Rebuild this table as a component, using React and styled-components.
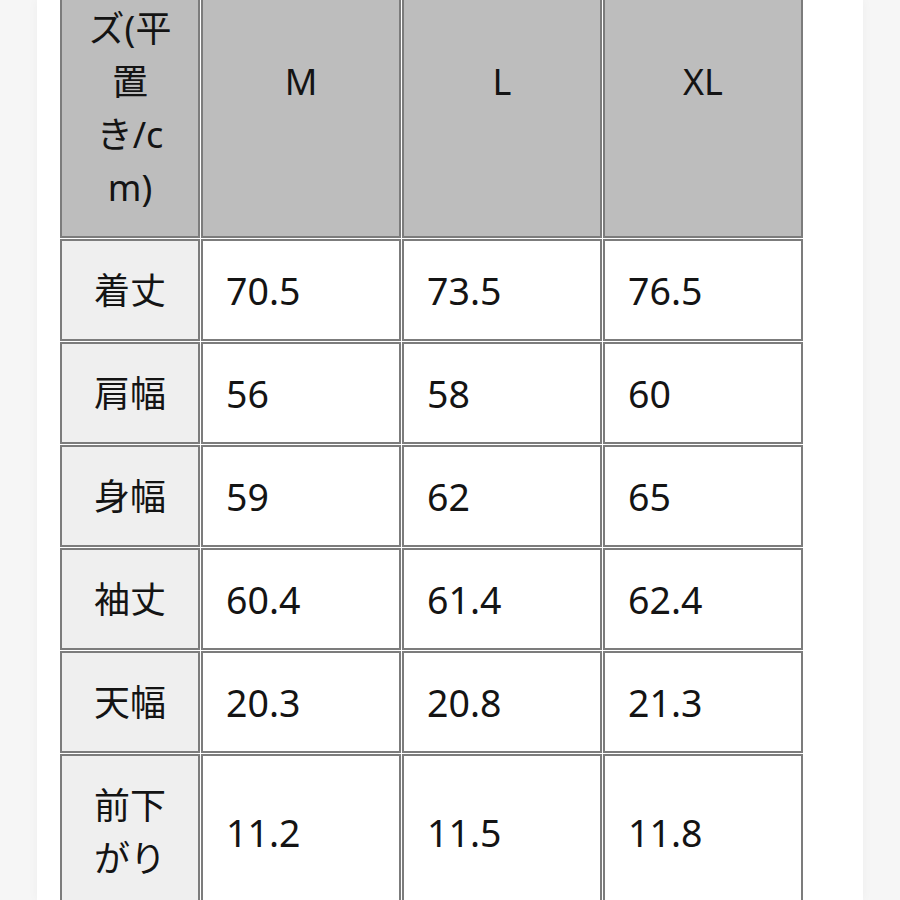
import React from "react";
import styled, { createGlobalStyle } from "styled-components";

const GlobalStyle = createGlobalStyle`
  html, body {
    margin: 0;
    padding: 0;
    background: #f6f6f6;
    overflow: hidden;
  }
  body {
    font-family: "Noto Sans", "Noto Sans CJK JP", sans-serif;
    color: #141414;
  }
`;

const Page = styled.div`
  width: 900px;
  height: 900px;
  overflow: hidden;
  display: flex;
  justify-content: flex-start;
`;

const Panel = styled.div`
  margin-left: 37px;
  width: 826px;
  height: 100%;
  background: #fff;
  box-shadow: 0 0 10px rgba(0, 0, 0, 0.04);
  padding-left: 22px;
  box-sizing: border-box;
`;

const SizeTable = styled.table`
  margin-top: -77px;
  border-collapse: separate;
  border-spacing: 1px;
  table-layout: fixed;
  font-size: 36px;
  line-height: 53px;
`;

const HeadCell = styled.th`
  box-sizing: border-box;
  width: ${(p) => (p.$first ? "140px" : "200px")};
  background: #bdbdbd;
  border: 2px solid #7c7c7c;
  padding: 23px 4px 22px;
  font-weight: 400;
  text-align: center;
  vertical-align: middle;
`;

const LabelCell = styled.td`
  background: #efefef;
  border: 2px solid #7c7c7c;
  padding: 23px 4px 22px;
  text-align: center;
  vertical-align: middle;
`;

const ValueCell = styled.td`
  background: #fff;
  border: 2px solid #7c7c7c;
  padding: 23px 8px 22px 23px;
  font-size: 37.5px;
  text-align: left;
  vertical-align: middle;
`;

const rows = [
  { label: ["着丈"], values: ["70.5", "73.5", "76.5"] },
  { label: ["肩幅"], values: ["56", "58", "60"] },
  { label: ["身幅"], values: ["59", "62", "65"] },
  { label: ["袖丈"], values: ["60.4", "61.4", "62.4"] },
  { label: ["天幅"], values: ["20.3", "20.8", "21.3"] },
  { label: ["前下", "がり"], values: ["11.2", "11.5", "11.8"] },
];

const headLines = ["サイ", "ズ(平", "置", "き/c", "m)"];

function Lines({ lines }) {
  return lines.map((line, i) => (
    <React.Fragment key={i}>
      {i > 0 && <br />}
      {line}
    </React.Fragment>
  ));
}

export default function App() {
  return (
    <>
      <GlobalStyle />
      <Page>
        <Panel>
          <SizeTable>
            <thead>
              <tr>
                <HeadCell $first>
                  <Lines lines={headLines} />
                </HeadCell>
                <HeadCell>M</HeadCell>
                <HeadCell>L</HeadCell>
                <HeadCell>XL</HeadCell>
              </tr>
            </thead>
            <tbody>
              {rows.map((row) => (
                <tr key={row.label.join("")}>
                  <LabelCell>
                    <Lines lines={row.label} />
                  </LabelCell>
                  {row.values.map((v, i) => (
                    <ValueCell key={i}>{v}</ValueCell>
                  ))}
                </tr>
              ))}
            </tbody>
          </SizeTable>
        </Panel>
      </Page>
    </>
  );
}
